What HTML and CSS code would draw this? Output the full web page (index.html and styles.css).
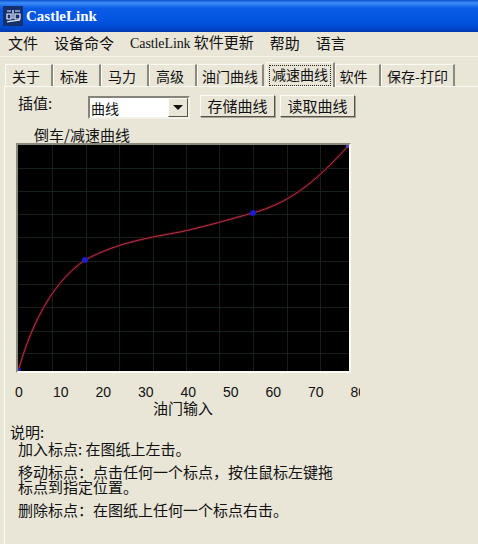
FILE: index.html
```html
<!DOCTYPE html>
<html>

<head>
  <title>CastleLink</title>
  <meta charset="UTF-8">
  <link rel="stylesheet" href="styles.css">
</head>

<body>
  <div class="title_bar">
    <svg class="app_icon" width="20" height="20" viewBox="0 0 20 20">
      <rect width="20" height="20" fill="#16306e" />
      <path d="M4 5h4M4 8h4v5H4zM10 4v9M12 5h5M12 8h5v5h-5zM4 16c4-1 8-1 13-2" fill="none" stroke="#eef2ff" stroke-width="1.2" />
    </svg>
    <span class="app_name">CastleLink</span>
  </div>

  <div class="menu_bar">
    <span class="menu_item">文件</span>
    <span class="menu_item">设备命令</span>
    <span class="menu_item"><span class="latin">CastleLink</span> 软件更新</span>
    <span class="menu_item">帮助</span>
    <span class="menu_item">语言</span>
  </div>

  <div class="tab_row">
    <div class="tab tab_1">关于</div>
    <div class="tab tab_1">标准</div>
    <div class="tab tab_1">马力</div>
    <div class="tab tab_1">高级</div>
    <div class="tab tab_2">油门曲线</div>
    <div class="tab tab_active"><span class="focus_box">减速曲线</span></div>
    <div class="tab tab_3">软件</div>
    <div class="tab tab_4">保存-打印</div>
  </div>

  <div class="panel">
    <div class="control_row">
      <span class="control_label">插值:</span>
      <div class="combo">
        <span class="combo_text">曲线</span>
        <span class="combo_btn"><span class="combo_arrow"></span></span>
      </div>
      <div class="btn btn_save">存储曲线</div>
      <div class="btn btn_read">读取曲线</div>
    </div>

    <div class="chart_title">倒车/减速曲线</div>

    <svg class="chart" width="331" height="226" viewBox="0 0 331 226">
      <rect width="331" height="226" fill="#000" />
      <path d="M34.5 0V226M68.5 0V226M101.5 0V226M135.5 0V226M168.5 0V226M201.5 0V226M235.5 0V226M269.5 0V226M302.5 0V226M0 23.5H331M0 46.5H331M0 69.5H331M0 92.5H331M0 116.5H331M0 139.5H331M0 162.5H331M0 186.5H331M0 208.5H331" fill="none" stroke="#132118" />
      <path class="curve_halo" d="M0 227C10 190 30 140 67 115C100 97 135 92 162 87C190 81 212 74 235 68C270 58 295 40 331 0" />
      <path class="curve_line" d="M0 227C10 190 30 140 67 115C100 97 135 92 162 87C190 81 212 74 235 68C270 58 295 40 331 0" />
      <circle cx="67" cy="115" r="3" fill="#1a1ad0" />
      <circle cx="235" cy="68" r="3" fill="#1a1ad0" />
      <circle cx="330" cy="1" r="2" fill="#4444dd" />
      <circle cx="1" cy="225" r="2" fill="#2222aa" />
    </svg>

    <div class="axis">
      <span>0</span><span>10</span><span>20</span><span>30</span><span>40</span><span>50</span><span>60</span><span>70</span><span>80</span>
    </div>
    <div class="axis_title">油门输入</div>

    <div class="help">
      <div class="help_head">说明:</div>
      <p class="help_line help_first">加入标点: 在图纸上左击。</p>
      <p class="help_line help_gap">移动标点：点击任何一个标点，按住鼠标左键拖<br>标点到指定位置。</p>
      <p class="help_line help_gap">删除标点：在图纸上任何一个标点右击。</p>
    </div>
  </div>
</body>

</html>
```

FILE: styles.css
```css
html,
body {
  width: 100%;
  height: 100%;
  margin: 0;
  padding: 0;
  overflow: hidden;
  background-color: #e9e6d8;
  color: #111;
  font-family: "Noto Sans CJK SC", "Liberation Sans", sans-serif;
  font-size: 15px;
  line-height: 16px;
}

.title_bar {
  height: 32px;
  box-sizing: border-box;
  padding-left: 3px;
  display: flex;
  align-items: center;
  gap: 3px;
  background: linear-gradient(to bottom, #0a4fd0 0, #3f8df5 3px, #0a5ce6 8px, #0353e0 22px, #0245c8 29px, #0038a8 32px);
}

.app_name {
  color: white;
  font-family: "Liberation Serif", serif;
  font-weight: bold;
  font-size: 15px;
}

.menu_bar {
  height: 22px;
  display: flex;
  align-items: center;
  padding: 0 0 2px 8px;
  gap: 16px;
  border-bottom: 1px solid #f6f4ea;
}

.latin {
  font-family: "Liberation Serif", serif;
  font-size: 14px;
  letter-spacing: -0.1px;
}

.tab_row {
  height: 29px;
  box-sizing: border-box;
  padding: 7px 0 0 5px;
  display: flex;
  align-items: flex-end;
  font-size: 14px;
}

.tab {
  height: 22px;
  box-sizing: border-box;
  padding-top: 3px;
  text-align: center;
  border-right: 2px solid #8c8a7e;
  border-left: 1px solid #fbfaf3;
  border-top: 1px solid #fbfaf3;
}

.tab_1 {
  width: 48px;
  padding-right: 5px;
}

.tab_2 {
  width: 67px;
}

.tab_3 {
  width: 46px;
  padding-right: 8px;
}

.tab_4 {
  width: 74px;
}

.tab_active {
  width: 69px;
  height: 25px;
  margin: 0 0 -1px 2px;
  padding: 2px 2px 0;
  position: relative;
}

.focus_box {
  display: block;
  height: 19px;
  border: 1px dotted #222;
}

.panel {
  min-height: 458px;
  box-sizing: border-box;
  margin-left: 4px;
  padding-top: 8px;
  border-top: 1px solid #fbfaf3;
  border-left: 1px solid #fbfaf3;
}

.control_row {
  height: 24px;
  display: flex;
  align-items: flex-start;
  padding-left: 13px;
}

.control_label {
  width: 70px;
}

.combo {
  width: 102px;
  height: 23px;
  margin-top: 1px;
  box-sizing: border-box;
  display: flex;
  background-color: white;
  border: 2px solid;
  border-color: #85837a #f4f2e8 #f4f2e8 #85837a;
  font-size: 14px;
}

.combo_text {
  flex: 1;
  padding: 2px 0 0 1px;
}

.combo_btn {
  width: 18px;
  display: grid;
  place-content: center;
  background-color: #e9e6d8;
  border: 1px solid;
  border-color: #fbfaf3 #55534a #55534a #fbfaf3;
}

.combo_arrow {
  width: 0;
  height: 0;
  border-width: 5px 5px 0;
  border-style: solid;
  border-color: #111 transparent transparent;
}

.btn {
  height: 22px;
  box-sizing: border-box;
  padding-top: 2px;
  text-align: center;
  background-color: #e9e6d8;
  border: 1px solid;
  border-color: #fbfaf3 #55534a #55534a #fbfaf3;
  box-shadow: 1px 1px 0 #a5a396;
}

.btn_save {
  width: 75px;
  margin-left: 10px;
}

.btn_read {
  width: 75px;
  margin-left: 5px;
}

.chart_title {
  margin: 8px 0 0 29px;
  height: 16px;
}

.chart {
  display: block;
  margin-left: 11px;
  border-width: 2px;
  border-style: solid;
  border-color: #8b897e #fbfaf3 #fbfaf3 #8b897e;
}

.curve_halo {
  fill: none;
  stroke: #2e0810;
  stroke-width: 3;
}

.curve_line {
  fill: none;
  stroke: #b8323f;
  stroke-width: 1;
}

.axis {
  display: grid;
  grid-template-columns: 38px repeat(8, 42.5px);
  width: 345px;
  margin: 11px 0 0 10px;
  overflow: hidden;
  font-family: "Liberation Sans", sans-serif;
  font-size: 14px;
}

.axis_title {
  margin-left: 148px;
}

.help {
  margin-top: 8px;
}

.help_head {
  margin-left: 5px;
}

.help_line {
  margin: 0 0 0 13px;
  line-height: 15px;
}

.help_first {
  margin-top: 1px;
}

.help_gap {
  margin-top: 8px;
}
```
